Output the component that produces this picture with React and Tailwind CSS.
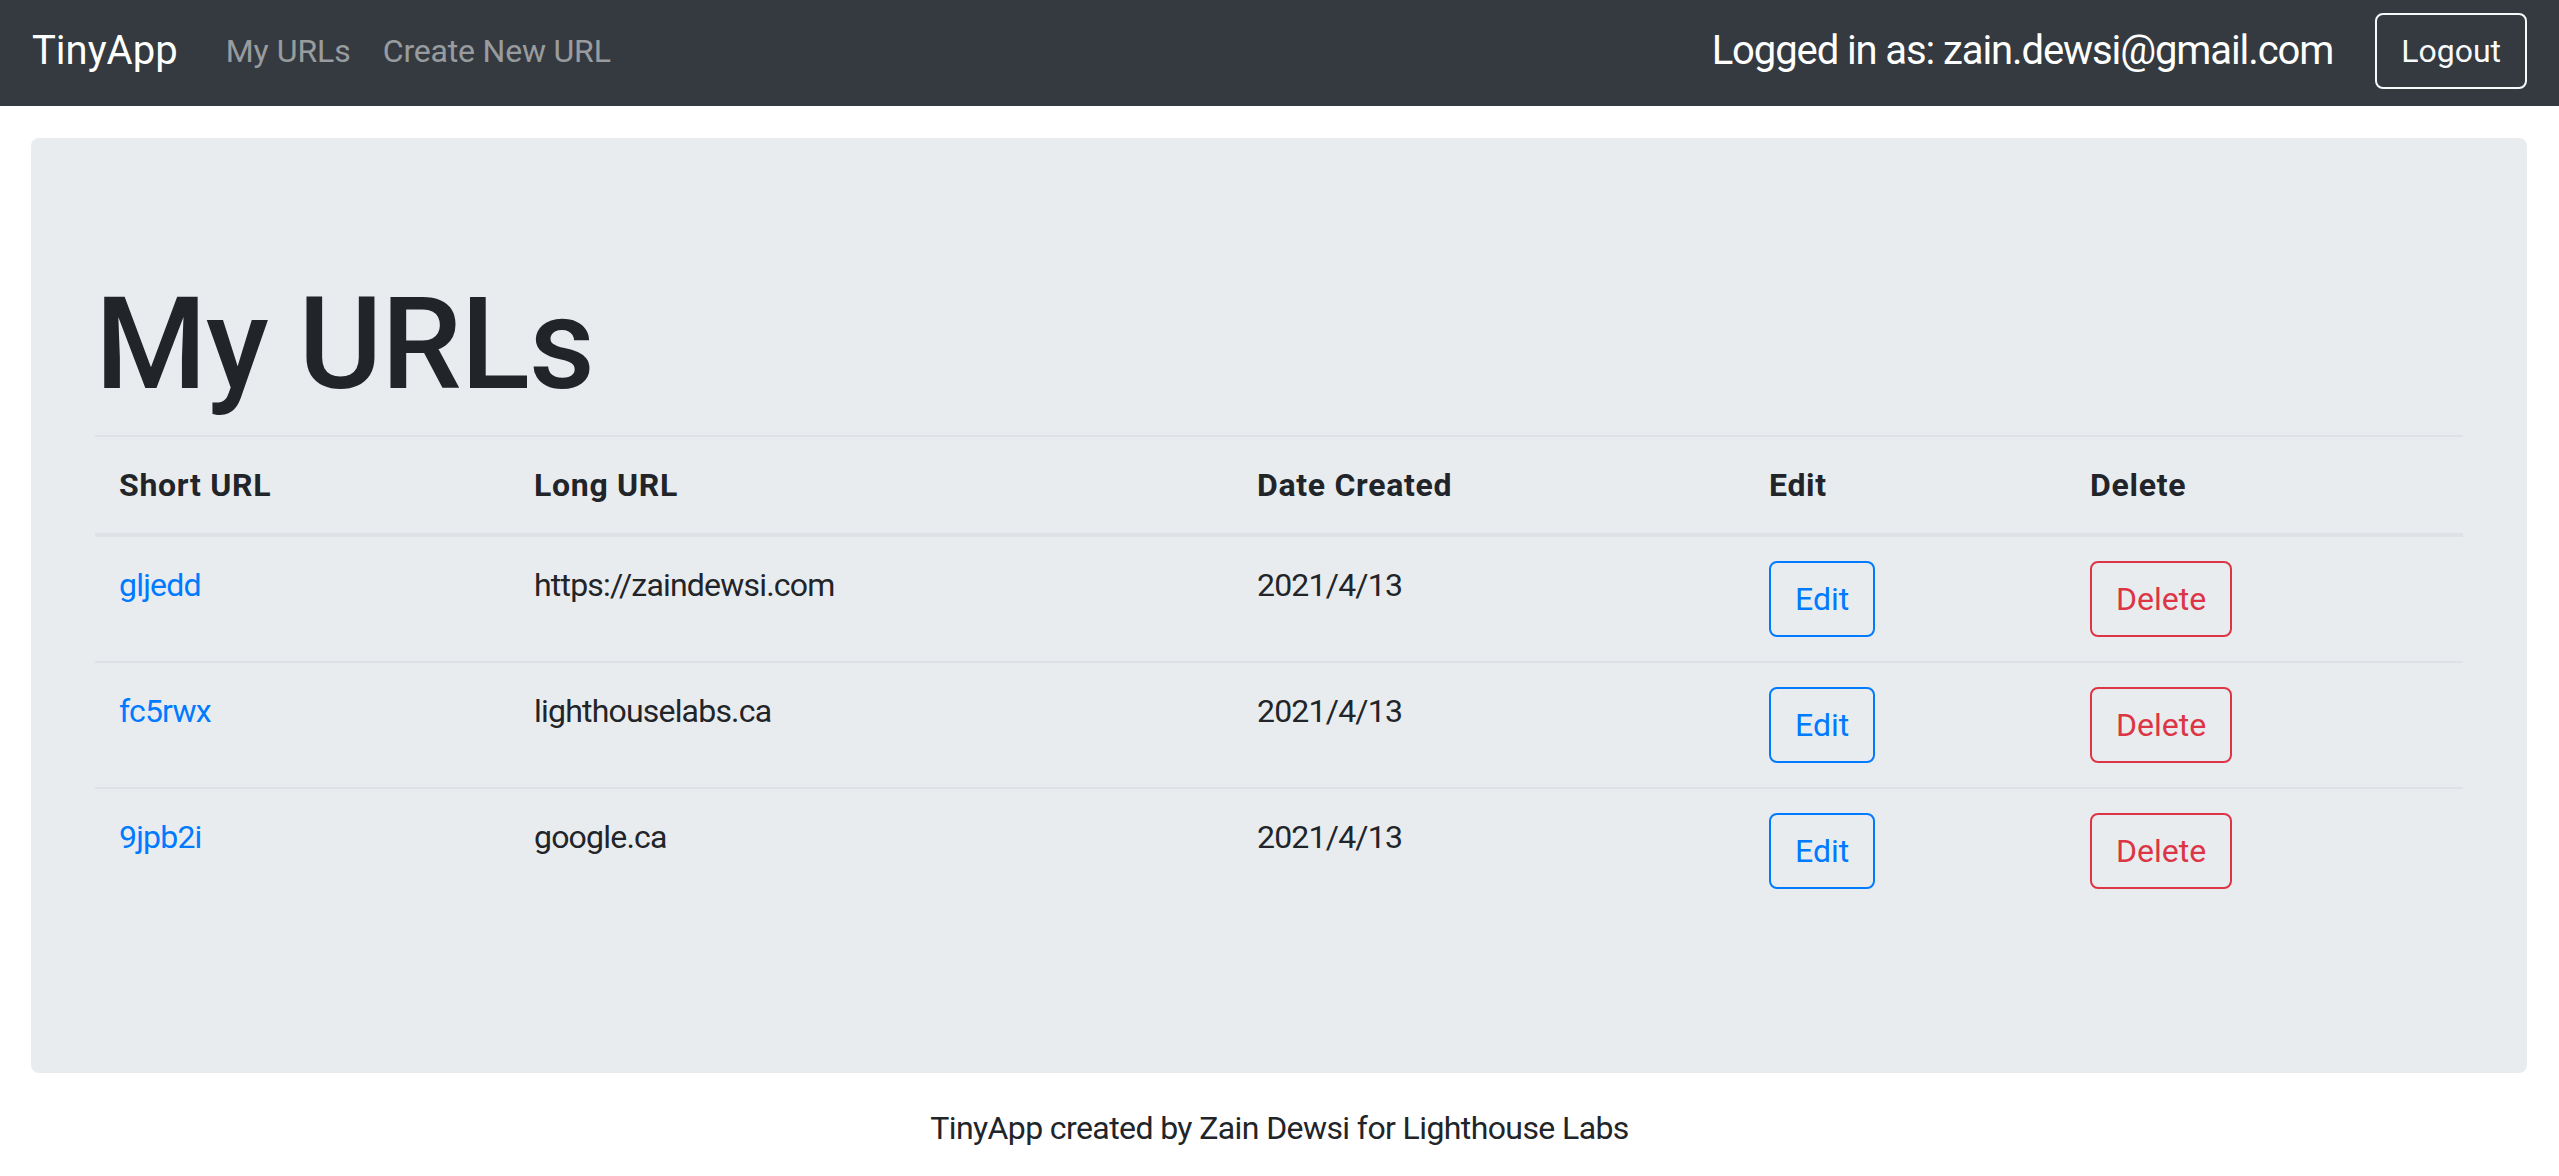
const urls = [
  { short: "gljedd", long: "https://zaindewsi.com", date: "2021/4/13" },
  { short: "fc5rwx", long: "lighthouselabs.ca", date: "2021/4/13" },
  { short: "9jpb2i", long: "google.ca", date: "2021/4/13" },
];

function NavBar() {
  return (
    <nav className="flex h-[106px] items-center justify-between bg-[#343a40] px-8 pb-[5px]">
      <div className="flex items-center">
        <a className="mr-8 text-[40px] leading-[60px] text-white">TinyApp</a>
        <a className="px-4 text-[32px] leading-[48px] text-white/50">My URLs</a>
        <a className="px-4 text-[32px] leading-[48px] tracking-[-0.2px] text-white/50">Create New URL</a>
      </div>
      <div className="flex items-center">
        <span className="mr-[42px] text-[40px] leading-[60px] tracking-[-1.1px] text-white">
          Logged in as: zain.dewsi@gmail.com
        </span>
        <button className="h-[76px] rounded-lg border-2 border-[#f8f9fa] px-6 text-[32px] leading-[48px] text-[#f8f9fa]">
          Logout
        </button>
      </div>
    </nav>
  );
}

function UrlTable() {
  return (
    <table className="mb-8 w-full border-collapse text-[32px] leading-[48px]">
      <thead>
        <tr className="tracking-[0.7px]">
          <th className="w-[415px] border-t-2 border-b-4 border-[#dee2e6] p-6 text-left align-bottom font-bold">Short URL</th>
          <th className="w-[723px] border-t-2 border-b-4 border-[#dee2e6] p-6 text-left align-bottom font-bold">Long URL</th>
          <th className="w-[512px] border-t-2 border-b-4 border-[#dee2e6] p-6 text-left align-bottom font-bold">Date Created</th>
          <th className="w-[321px] border-t-2 border-b-4 border-[#dee2e6] p-6 text-left align-bottom font-bold">Edit</th>
          <th className="border-t-2 border-b-4 border-[#dee2e6] p-6 text-left align-bottom font-bold">Delete</th>
        </tr>
      </thead>
      <tbody>
        {urls.map((u) => (
          <tr key={u.short} className="tracking-[-0.8px]">
            <td className="border-t-2 border-[#dee2e6] p-6 align-top">
              <a className="text-[#007bff]">{u.short}</a>
            </td>
            <td className="border-t-2 border-[#dee2e6] p-6 align-top">{u.long}</td>
            <td className="border-t-2 border-[#dee2e6] p-6 align-top">{u.date}</td>
            <td className="border-t-2 border-[#dee2e6] p-6 align-top">
              <button className="rounded-lg border-2 border-[#007bff] px-6 py-3 text-[32px] leading-[48px] tracking-normal text-[#007bff]">
                Edit
              </button>
            </td>
            <td className="border-t-2 border-[#dee2e6] p-6 align-top">
              <button className="rounded-lg border-2 border-[#dc3545] px-6 py-3 text-[32px] leading-[48px] tracking-normal text-[#dc3545]">
                Delete
              </button>
            </td>
          </tr>
        ))}
      </tbody>
    </table>
  );
}

export default function App() {
  return (
    <div className="min-h-screen bg-white font-['Roboto','Noto_Sans',sans-serif] text-[#212529]">
      <NavBar />
      <main className="ml-[31px] mr-[32px] pt-8">
        <div className="rounded-lg bg-[#e9ecef] px-16 py-32">
          <h1 className="mb-[13px] text-[128px] leading-[156px] font-medium tracking-[-1px]">My URLs</h1>
          <UrlTable />
        </div>
      </main>
      <footer className="mt-[31px] text-center text-[32px] leading-[48px] tracking-[-0.6px]">
        TinyApp created by Zain Dewsi for Lighthouse Labs
      </footer>
    </div>
  );
}
